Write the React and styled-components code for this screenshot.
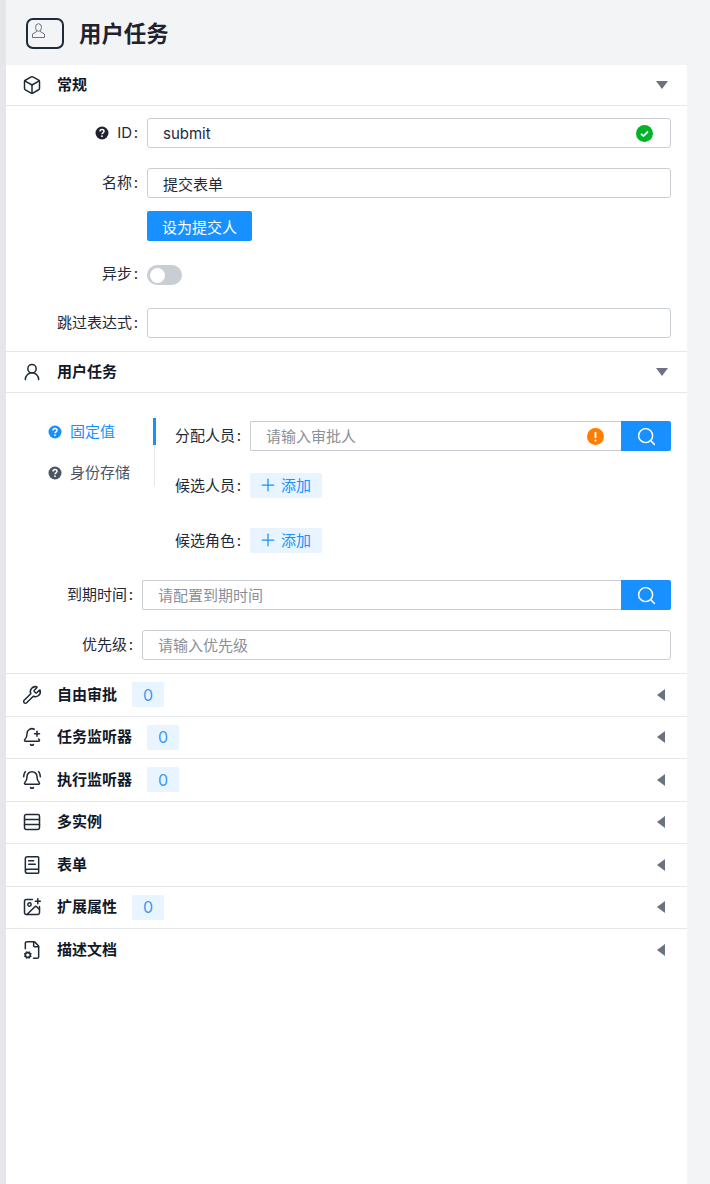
import React from "react";
import styled, { createGlobalStyle } from "styled-components";
import { Box, UserRound, Wrench, BellPlus, BellRing, Rows3, BookText, ImagePlus, FileCog, Search, Plus } from "lucide-react";

const Global = createGlobalStyle`
  html, body { margin: 0; padding: 0; background: #f3f4f6; }
  * { box-sizing: border-box; }
  body { font-family: "Inter", "Noto Sans CJK SC", "Noto Sans", sans-serif; color: #1f2937; }
`;

const Shell = styled.div`
  width: 710px; height: 1184px; overflow: hidden;
  border-left: 6px solid #e5e7eb;
  display: flex; flex-direction: column;
`;
const Head = styled.header`
  width: 681px; height: 65px; flex: none;
  display: flex; align-items: center; gap: 15px;
  padding: 2px 0 0 20px;
`;
const Title = styled.h1`
  margin: 0; font-size: 22.4px; line-height: 28px; font-weight: 700; color: #1f2330;
`;
const Panel = styled.main`
  width: 681px; flex: 1; background: #fff;
`;
const Section = styled.section`
  border-top: ${p => (p.$first ? "none" : "1px solid #e5e7eb")};
`;
const Bar = styled.div`
  height: ${p => p.$h}px;
  display: flex; align-items: center;
  padding: 0 20px 0 16px;
  border-bottom: ${p => (p.$open ? "1px solid #e5e7eb" : "none")};
`;
const BarIcon = styled.span`
  width: 20px; height: 20px; display: flex; color: #1f2937;
  margin-right: 15px; flex: none;
`;
const BarTitle = styled.span`
  font-size: 15px; font-weight: 700; color: #111827; line-height: 20px;
`;
const Count = styled.span`
  width: 32px; height: 25px; margin-left: 15px; border-radius: 2px;
  background: #e8f4ff; color: #3f97f5; font-size: 16px;
  display: flex; align-items: center; justify-content: center;
`;
const Caret = styled.span`
  margin-left: auto; width: 0; height: 0; border-style: solid;
  ${p => p.$open
    ? "border-width: 8px 6px 0 6px; border-color: #6b7280 transparent transparent transparent; margin-right: -1px;"
    : "border-width: 6px 8px 6px 0; border-color: transparent #6b7280 transparent transparent; margin-right: 2px;"}
`;
const GeneralBody = styled.div`
  padding: 12px 16px 13px 0;
  display: flex; flex-direction: column;
`;
const Row = styled.div`
  display: flex; align-items: center; min-height: ${p => p.$h || 30}px;
  margin-bottom: ${p => p.$mb || 0}px;
`;
const LabelBox = styled.label`
  width: ${p => p.$w}px; flex: none; margin-right: 8px;
  font-size: 15px; line-height: 20px; color: #1f2937;
  display: flex; justify-content: flex-end; align-items: center;
  margin-top: ${p => (p.$raised ? "-2px" : "0")};
`;
const HelpSlot = styled.span`
  display: flex; margin-right: 8px;
`;
const Colon = styled.span`
  width: 7px; text-align: right; padding-right: 1px;
`;
const Label = ({ w, help, raised, children }) => (
  <LabelBox $w={w} $raised={raised}>
    {help && <HelpSlot>{help}</HelpSlot>}
    <span>{children}</span>
    <Colon>:</Colon>
  </LabelBox>
);
const Field = styled.div`
  position: relative; flex: 1; height: 30px; min-width: 0; display: flex;
`;
const Input = styled.input`
  flex: 1; min-width: 0; height: 30px;
  border: 1px solid #c9cdd4; border-radius: ${p => (p.$joined ? "2px 0 0 2px" : "3px")};
  border-right-width: ${p => (p.$joined ? 0 : 1)}px;
  padding: 0 15px; outline: none; background: #fff;
  font: 15px "Inter", "Noto Sans CJK SC", sans-serif; color: #1f2937;
  &::placeholder { color: #8a9099; opacity: 1; }
`;
const Status = styled.svg`
  position: absolute; top: 6.500px; right: ${p => p.$right}px; width: 17px; height: 17px;
`;
const Primary = styled.button`
  width: 105px; height: 30px; margin-left: 141px; border: 0; border-radius: 2px;
  background: #1890ff; color: #fff; padding: 0;
  font: 15px "Inter", "Noto Sans CJK SC", sans-serif;
`;
const Switch = styled.span`
  width: 35px; height: 20px; border-radius: 10px; background: #c9cdd4;
  display: flex; align-items: center; padding-left: 3px;
`;
const Knob = styled.span`
  width: 15px; height: 15px; border-radius: 50%; background: #fff;
`;
const SearchBtn = styled.button`
  width: 50px; height: 30px; flex: none; border: 0; padding: 0;
  border-radius: 0 2px 2px 0; background: #1890ff; color: #fff;
  display: flex; align-items: center; justify-content: center;
`;
const TaskBody = styled.div`
  padding: 25px 16px 13px 0;
`;
const Tabs = styled.div`
  display: flex; align-items: flex-start; margin-bottom: 27px;
`;
const TabList = styled.div`
  width: 149px; flex: none; height: 68px;
  border-right: 1px solid #e5e7eb;
  display: flex; flex-direction: column; gap: 14px;
`;
const Tab = styled.div`
  position: relative; height: 27px; padding-left: 42px;
  display: flex; align-items: center; gap: 8px;
  font-size: 15px; line-height: 20px; color: ${p => (p.$active ? "#1890ff" : "#4b5563")};
  ${p => p.$active ? `&::after { content: ""; position: absolute; right: -2px; top: 0; width: 3px; height: 27px; background: #1890ff; }` : ""}
`;
const TabPane = styled.div`
  flex: 1; min-width: 0; padding: 3px 0 0 20px;
`;
const AddBtn = styled.button`
  width: 72px; height: 25px; border: 0; border-radius: 2px; padding: 0 0 2px 8px;
  background: #e8f4ff; color: #1890ff;
  display: flex; align-items: center; gap: 3px;
  font: 15px "Inter", "Noto Sans CJK SC", sans-serif;
`;
const Help = ({ color }) => (
  <svg width="14" height="14" viewBox="0 0 14 14" style={{ flex: "none" }}>
    <circle cx="7" cy="7" r="6.500" fill={color} />
    <path d="M5 5.400c0-1.200 1-1.900 2-1.900s2 .7 2 1.800c0 1.500-2 1.500-2 3" fill="none" stroke="#fff" strokeWidth="1.500" />
    <circle cx="7" cy="10.200" r=".9" fill="#fff" />
  </svg>
);

const HeadIcon = () => (
  <svg width="38" height="31" viewBox="0 0 38 31" fill="none">
    <rect x="1" y="1" width="36" height="29" rx="6" stroke="#1f2937" strokeWidth="2" />
    <ellipse cx="12.500" cy="9.500" rx="3" ry="3.800" stroke="#6b7280" />
    <path d="M10.500 12.500v1.200L6.500 16v3.500h12V16l-4-2.300v-1.200" stroke="#6b7280" />
  </svg>
);

const sections = [
  { icon: Wrench, title: "自由审批", count: 0 },
  { icon: BellPlus, title: "任务监听器", count: 0 },
  { icon: BellRing, title: "执行监听器", count: 0 },
  { icon: Rows3, title: "多实例" },
  { icon: BookText, title: "表单" },
  { icon: ImagePlus, title: "扩展属性", count: 0 },
  { icon: FileCog, title: "描述文档" },
];

const Header = ({ icon: Icon, title, count, open, h }) => (
  <Bar $open={open} $h={h}>
    <BarIcon><Icon size={20} strokeWidth={1.8} /></BarIcon>
    <BarTitle>{title}</BarTitle>
    {count !== undefined && <Count>{count}</Count>}
    <Caret $open={open} />
  </Bar>
);

export default function App() {
  return (
    <>
      <Global />
      <Shell>
        <Head>
          <HeadIcon />
          <Title>用户任务</Title>
        </Head>
        <Panel>
          <Section $first>
            <Header icon={Box} title="常规" open h={41} />
            <GeneralBody>
              <Row $mb={20}>
                <Label w={133} help={<Help color="#1f2330" />}>ID</Label>
                <Field>
                  <Input value="submit" readOnly />
                  <Status $right={18} viewBox="0 0 17 17">
                    <circle cx="8.500" cy="8.500" r="8.500" fill="#00b42a" />
                    <path d="M5 8.800l2.500 2.300L12 6.500" fill="none" stroke="#fff" strokeWidth="1.800" />
                  </Status>
                </Field>
              </Row>
              <Row $mb={13}>
                <Label w={133}>名称</Label>
                <Field><Input value="提交表单" readOnly /></Field>
              </Row>
              <Row $mb={24}><Primary>设为提交人</Primary></Row>
              <Row $h={20} $mb={23}>
                <Label w={133} raised>异步</Label>
                <Switch><Knob /></Switch>
              </Row>
              <Row>
                <Label w={133}>跳过表达式</Label>
                <Field><Input readOnly /></Field>
              </Row>
            </GeneralBody>
          </Section>
          <Section>
            <Header icon={UserRound} title="用户任务" open h={41} />
            <TaskBody>
              <Tabs>
                <TabList>
                  <Tab $active><Help color="#1890ff" />固定值</Tab>
                  <Tab><Help color="#4b5563" />身份存储</Tab>
                </TabList>
                <TabPane>
                  <Row $mb={22}>
                    <Label w={67}>分配人员</Label>
                    <Field>
                      <Input $joined placeholder="请输入审批人" />
                      <Status $right={67} viewBox="0 0 17 17">
                        <circle cx="8.500" cy="8.500" r="8.500" fill="#ff7d00" />
                        <path d="M8.500 4v6" stroke="#fff" strokeWidth="1.800" />
                        <circle cx="8.500" cy="12.500" r="1" fill="#fff" />
                      </Status>
                      <SearchBtn><Search size={21} strokeWidth={1.7} /></SearchBtn>
                    </Field>
                  </Row>
                  <Row $h={25} $mb={30}>
                    <Label w={67}>候选人员</Label>
                    <AddBtn><Plus size={20} strokeWidth={1.500} />添加</AddBtn>
                  </Row>
                  <Row $h={25}>
                    <Label w={67}>候选角色</Label>
                    <AddBtn><Plus size={20} strokeWidth={1.500} />添加</AddBtn>
                  </Row>
                </TabPane>
              </Tabs>
              <Row $mb={20}>
                <Label w={128}>到期时间</Label>
                <Field>
                  <Input $joined placeholder="请配置到期时间" />
                  <SearchBtn><Search size={21} strokeWidth={1.7} /></SearchBtn>
                </Field>
              </Row>
              <Row>
                <Label w={128}>优先级</Label>
                <Field><Input placeholder="请输入优先级" /></Field>
              </Row>
            </TaskBody>
          </Section>
          {sections.map(s => (
            <Section key={s.title}>
              <Header {...s} h={41.5} />
            </Section>
          ))}
        </Panel>
      </Shell>
    </>
  );
}
